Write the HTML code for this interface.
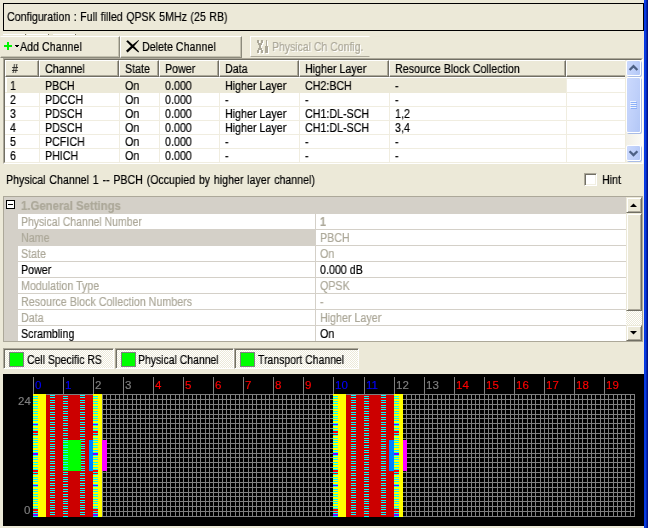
<!DOCTYPE html>
<html lang="en"><head><meta charset="utf-8"><title>Physical Channel Configuration</title>
<style>
html,body{margin:0;padding:0;}
body{width:648px;height:528px;overflow:hidden;background:#ece9d8;position:relative;
 font-family:"Liberation Sans","DejaVu Sans",sans-serif;font-size:12.5px;color:#000;line-height:13px;}
.a{position:absolute;white-space:nowrap;}
.t{position:absolute;white-space:nowrap;height:13px;line-height:13px;transform-origin:0 50%;transform:scaleX(0.855);will-change:transform;-webkit-text-stroke:0.2px currentColor;}
.g{color:#aca899;}
.b{font-weight:bold;}
.btn{position:absolute;box-sizing:border-box;border:1px solid;border-color:#fff #8c8a7c #8c8a7c #fff;}
.hd{position:absolute;box-sizing:border-box;top:60px;height:17px;background:#ece9d8;
 border-top:1px solid #fff;border-left:1px solid #fff;border-right:1px solid #716f64;border-bottom:1px solid #716f64;
 box-shadow:inset -1px -1px 0 #aca899;}
.row{position:absolute;left:5px;width:621px;height:13px;background:#fff;}
.leg{position:absolute;box-sizing:border-box;top:348px;height:21px;border:1px solid;border-color:#aca899 #fff #fff #aca899;
 background:repeating-conic-gradient(#fff 0 25%,#ece9d8 0 50%) 0 0/2px 2px;box-shadow:inset 1px 1px 0 #716f64;}
.sw{position:absolute;box-sizing:border-box;top:3px;width:15px;height:15px;background:#00ff00;border:1px solid #808080;}
.pr{position:absolute;left:18px;width:608px;height:15px;background:#fff;}
</style></head><body>
<div class="a" style="left:644px;top:0;width:1px;height:528px;background:#0636e6;"></div>
<div class="a" style="left:645px;top:0;width:1px;height:528px;background:#083fdc;"></div>
<div class="a" style="left:646px;top:0;width:1px;height:528px;background:#0325b4;"></div>
<div class="a" style="left:647px;top:0;width:1px;height:528px;background:#00118a;"></div>
<div class="a" style="left:3px;top:3px;width:639px;height:26px;border:1px solid #000;background:#ece9d8;"></div>
<div class="t " style="left:7px;top:11px;transform:scaleX(0.85);word-spacing:0.65px;">Configuration : Full filled QPSK 5MHz (25 RB)</div>
<div class="a" style="left:3px;top:34px;width:22px;height:1px;background:#fff;"></div>
<div class="a" style="left:25px;top:34px;width:1px;height:1px;background:#716f64;"></div>
<div class="a" style="left:27px;top:34px;width:21px;height:1px;background:#fff;"></div>
<div class="a" style="left:48px;top:34px;width:1px;height:1px;background:#716f64;"></div>
<div class="a" style="left:53px;top:34px;width:22px;height:1px;background:#fff;"></div>
<div class="a" style="left:75px;top:34px;width:1px;height:1px;background:#716f64;"></div>
<div class="btn" style="left:0;top:36px;width:120px;height:22px;border-left-color:#ece9d8;box-shadow:inset -1px -1px 0 #c4c1b0;"></div>
<div class="btn" style="left:120px;top:36px;width:122px;height:22px;box-shadow:inset -1px -1px 0 #c4c1b0;"></div>
<div class="a" style="left:250px;top:36px;width:120px;height:21px;box-sizing:border-box;border:1px solid;border-color:#fff #ece9d8 #aca899 #fff;"></div>
<svg class="a" style="left:0px;top:36px" width="20" height="22" viewBox="0 0 20 22" shape-rendering="crispEdges"><path d="M7 6h2v8h-2zM4 9h8v2h-8z" fill="#00f400"/><path d="M15 9h4v1h-4zM16 10h2v1h-2z" fill="#000"/></svg>
<div class="t " style="left:20px;top:41px;">Add Channel</div>
<svg class="a" style="left:120px;top:36px" width="22" height="22" viewBox="0 0 22 22"><path d="M6.2 5.2L7.8 4.2L13.5 9.6L19 15.6L18.4 16.4L12 11.2z" fill="#000"/><path d="M6 14.8L7.6 16.6L13.2 11.2L19 4.6L18.6 4L12 9.2z" fill="#000"/></svg>
<div class="t " style="left:142px;top:41px;">Delete Channel</div>
<svg class="a" style="left:250px;top:36px" width="22" height="22" viewBox="0 0 22 22" shape-rendering="crispEdges"><path transform="translate(1,1)" d="M7 4h2v3h-2zM11 4h2v3h-2zM8 7h4v2h-4zM9 8h2v5h-2zM8 12h4v2h-4zM7 14h2v3h-2zM11 14h2v3h-2zM16 4h1v7h-1zM15 10h3v7h-3z" fill="#fff"/><path d="M7 4h2v3h-2zM11 4h2v3h-2zM8 7h4v2h-4zM9 8h2v5h-2zM8 12h4v2h-4zM7 14h2v3h-2zM11 14h2v3h-2zM16 4h1v7h-1zM15 10h3v7h-3z" fill="#aca899"/></svg>
<div class="t g" style="left:272px;top:41px;transform:scaleX(0.838);text-shadow:1.2px 1px 0 #fff;">Physical Ch Config.</div>
<div class="a" style="left:3px;top:58px;width:640px;height:106px;box-sizing:border-box;border:1px solid;border-color:#aca899 #fff #fff #aca899;background:#fff;"></div>
<div class="a" style="left:4px;top:59px;width:638px;height:104px;box-sizing:border-box;border:1px solid;border-color:#716f64 #f1efe2 #f1efe2 #716f64;background:#fff;"></div>
<div class="a" style="left:5px;top:60px;width:621px;height:17px;background:#716f64;"></div>
<div class="hd" style="left:5px;width:34px;"></div>
<div class="t " style="left:12px;top:63px;">#</div>
<div class="hd" style="left:39px;width:80px;"></div>
<div class="t " style="left:45px;top:63px;">Channel</div>
<div class="hd" style="left:119px;width:40px;"></div>
<div class="t " style="left:125px;top:63px;">State</div>
<div class="hd" style="left:159px;width:60px;"></div>
<div class="t " style="left:165px;top:63px;">Power</div>
<div class="hd" style="left:219px;width:80px;"></div>
<div class="t " style="left:225px;top:63px;">Data</div>
<div class="hd" style="left:299px;width:90px;"></div>
<div class="t " style="left:305px;top:63px;">Higher Layer</div>
<div class="hd" style="left:389px;width:177px;"></div>
<div class="t " style="left:395px;top:63px;">Resource Block Collection</div>
<div class="hd" style="left:566px;width:62px;"></div>
<div class="a" style="left:5px;top:77px;width:621px;height:1px;background:#fff;"></div>
<div class="a" style="left:5px;top:78px;width:621px;height:85px;background:#f0ede0;"></div>
<div class="a" style="left:7px;top:78px;width:559px;height:15px;background:#ece9d8;"></div>
<div class="a" style="left:5px;top:78px;width:2px;height:14px;background:#fff;"></div>
<div class="a" style="left:567px;top:79px;width:58px;height:13px;background:#fff;"></div>
<div class="t " style="left:10px;top:80px;">1</div>
<div class="t " style="left:45px;top:80px;">PBCH</div>
<div class="t " style="left:125px;top:80px;">On</div>
<div class="t " style="left:165px;top:80px;">0.000</div>
<div class="t " style="left:225px;top:80px;">Higher Layer</div>
<div class="t " style="left:305px;top:80px;">CH2:BCH</div>
<div class="t " style="left:395px;top:80px;">-</div>
<div class="a" style="left:5px;top:93px;width:34px;height:13px;background:#fff;"></div>
<div class="a" style="left:40px;top:93px;width:79px;height:13px;background:#fff;"></div>
<div class="a" style="left:120px;top:93px;width:39px;height:13px;background:#fff;"></div>
<div class="a" style="left:160px;top:93px;width:59px;height:13px;background:#fff;"></div>
<div class="a" style="left:220px;top:93px;width:79px;height:13px;background:#fff;"></div>
<div class="a" style="left:300px;top:93px;width:89px;height:13px;background:#fff;"></div>
<div class="a" style="left:390px;top:93px;width:176px;height:13px;background:#fff;"></div>
<div class="a" style="left:567px;top:93px;width:58px;height:13px;background:#fff;"></div>
<div class="t " style="left:10px;top:94px;">2</div>
<div class="t " style="left:45px;top:94px;">PDCCH</div>
<div class="t " style="left:125px;top:94px;">On</div>
<div class="t " style="left:165px;top:94px;">0.000</div>
<div class="t " style="left:225px;top:94px;">-</div>
<div class="t " style="left:305px;top:94px;">-</div>
<div class="t " style="left:395px;top:94px;">-</div>
<div class="a" style="left:5px;top:107px;width:34px;height:13px;background:#fff;"></div>
<div class="a" style="left:40px;top:107px;width:79px;height:13px;background:#fff;"></div>
<div class="a" style="left:120px;top:107px;width:39px;height:13px;background:#fff;"></div>
<div class="a" style="left:160px;top:107px;width:59px;height:13px;background:#fff;"></div>
<div class="a" style="left:220px;top:107px;width:79px;height:13px;background:#fff;"></div>
<div class="a" style="left:300px;top:107px;width:89px;height:13px;background:#fff;"></div>
<div class="a" style="left:390px;top:107px;width:176px;height:13px;background:#fff;"></div>
<div class="a" style="left:567px;top:107px;width:58px;height:13px;background:#fff;"></div>
<div class="t " style="left:10px;top:108px;">3</div>
<div class="t " style="left:45px;top:108px;">PDSCH</div>
<div class="t " style="left:125px;top:108px;">On</div>
<div class="t " style="left:165px;top:108px;">0.000</div>
<div class="t " style="left:225px;top:108px;">Higher Layer</div>
<div class="t " style="left:305px;top:108px;">CH1:DL-SCH</div>
<div class="t " style="left:395px;top:108px;">1,2</div>
<div class="a" style="left:5px;top:121px;width:34px;height:13px;background:#fff;"></div>
<div class="a" style="left:40px;top:121px;width:79px;height:13px;background:#fff;"></div>
<div class="a" style="left:120px;top:121px;width:39px;height:13px;background:#fff;"></div>
<div class="a" style="left:160px;top:121px;width:59px;height:13px;background:#fff;"></div>
<div class="a" style="left:220px;top:121px;width:79px;height:13px;background:#fff;"></div>
<div class="a" style="left:300px;top:121px;width:89px;height:13px;background:#fff;"></div>
<div class="a" style="left:390px;top:121px;width:176px;height:13px;background:#fff;"></div>
<div class="a" style="left:567px;top:121px;width:58px;height:13px;background:#fff;"></div>
<div class="t " style="left:10px;top:122px;">4</div>
<div class="t " style="left:45px;top:122px;">PDSCH</div>
<div class="t " style="left:125px;top:122px;">On</div>
<div class="t " style="left:165px;top:122px;">0.000</div>
<div class="t " style="left:225px;top:122px;">Higher Layer</div>
<div class="t " style="left:305px;top:122px;">CH1:DL-SCH</div>
<div class="t " style="left:395px;top:122px;">3,4</div>
<div class="a" style="left:5px;top:135px;width:34px;height:13px;background:#fff;"></div>
<div class="a" style="left:40px;top:135px;width:79px;height:13px;background:#fff;"></div>
<div class="a" style="left:120px;top:135px;width:39px;height:13px;background:#fff;"></div>
<div class="a" style="left:160px;top:135px;width:59px;height:13px;background:#fff;"></div>
<div class="a" style="left:220px;top:135px;width:79px;height:13px;background:#fff;"></div>
<div class="a" style="left:300px;top:135px;width:89px;height:13px;background:#fff;"></div>
<div class="a" style="left:390px;top:135px;width:176px;height:13px;background:#fff;"></div>
<div class="a" style="left:567px;top:135px;width:58px;height:13px;background:#fff;"></div>
<div class="t " style="left:10px;top:136px;">5</div>
<div class="t " style="left:45px;top:136px;">PCFICH</div>
<div class="t " style="left:125px;top:136px;">On</div>
<div class="t " style="left:165px;top:136px;">0.000</div>
<div class="t " style="left:225px;top:136px;">-</div>
<div class="t " style="left:305px;top:136px;">-</div>
<div class="t " style="left:395px;top:136px;">-</div>
<div class="a" style="left:5px;top:149px;width:34px;height:13px;background:#fff;"></div>
<div class="a" style="left:40px;top:149px;width:79px;height:13px;background:#fff;"></div>
<div class="a" style="left:120px;top:149px;width:39px;height:13px;background:#fff;"></div>
<div class="a" style="left:160px;top:149px;width:59px;height:13px;background:#fff;"></div>
<div class="a" style="left:220px;top:149px;width:79px;height:13px;background:#fff;"></div>
<div class="a" style="left:300px;top:149px;width:89px;height:13px;background:#fff;"></div>
<div class="a" style="left:390px;top:149px;width:176px;height:13px;background:#fff;"></div>
<div class="a" style="left:567px;top:149px;width:58px;height:13px;background:#fff;"></div>
<div class="t " style="left:10px;top:150px;">6</div>
<div class="t " style="left:45px;top:150px;">PHICH</div>
<div class="t " style="left:125px;top:150px;">On</div>
<div class="t " style="left:165px;top:150px;">0.000</div>
<div class="t " style="left:225px;top:150px;">-</div>
<div class="t " style="left:305px;top:150px;">-</div>
<div class="t " style="left:395px;top:150px;">-</div>
<div class="a" style="left:625px;top:60px;width:1px;height:102px;background:#efecdd;"></div>
<div class="a" style="left:626px;top:60px;width:16px;height:102px;background:linear-gradient(90deg,#f1efe6,#fbfaf6);"></div>
<div class="a" style="left:643px;top:58px;width:1px;height:106px;background:#f3f0e1;"></div>
<div class="a" style="left:626px;top:60px;width:15px;height:16px;box-sizing:border-box;border:1px solid #fff;border-radius:2px;background:linear-gradient(100deg,#cbd9fd,#bfd0fa 55%,#b3c7f6);box-shadow:1px 1px 0 #a9bce6;"></div>
<svg class="a" style="left:626px;top:60px" width="15" height="16" viewBox="0 0 15 16"><path d="M3.6 10L7.5 6.1L11.4 10" stroke="#4d6185" stroke-width="2.3" fill="none"/></svg>
<div class="a" style="left:626px;top:77px;width:15px;height:56px;box-sizing:border-box;border:1px solid #fff;border-radius:2px;background:linear-gradient(100deg,#cbd9fd,#bfd0fa 55%,#b3c7f6);box-shadow:1px 1px 0 #a9bce6;"></div>
<svg class="a" style="left:626px;top:77px" width="15" height="56" viewBox="0 0 15 56" shape-rendering="crispEdges"><rect x="4" y="24" width="6" height="1" fill="#eef4fe"/><rect x="5" y="25" width="6" height="1" fill="#8cb0f8"/><rect x="4" y="26" width="6" height="1" fill="#eef4fe"/><rect x="5" y="27" width="6" height="1" fill="#8cb0f8"/><rect x="4" y="28" width="6" height="1" fill="#eef4fe"/><rect x="5" y="29" width="6" height="1" fill="#8cb0f8"/><rect x="4" y="30" width="6" height="1" fill="#eef4fe"/><rect x="5" y="31" width="6" height="1" fill="#8cb0f8"/></svg>
<div class="a" style="left:626px;top:145px;width:15px;height:16px;box-sizing:border-box;border:1px solid #fff;border-radius:2px;background:linear-gradient(100deg,#cbd9fd,#bfd0fa 55%,#b3c7f6);box-shadow:1px 1px 0 #a9bce6;"></div>
<svg class="a" style="left:626px;top:145px" width="15" height="16" viewBox="0 0 15 16"><path d="M3.6 6.2L7.5 10.1L11.4 6.2" stroke="#4d6185" stroke-width="2.3" fill="none"/></svg>
<div class="t " style="left:6px;top:174px;transform:scaleX(0.85);word-spacing:1px;">Physical Channel 1 -- PBCH (Occupied by higher layer channel)</div>
<div class="a" style="left:584px;top:173px;width:13px;height:13px;box-sizing:border-box;border:1px solid;border-color:#aca899 #fff #fff #aca899;background:#fff;box-shadow:inset 1px 1px 0 #716f64, inset -1px -1px 0 #f1efe2;"></div>
<div class="t " style="left:602px;top:174px;">Hint</div>
<div class="a" style="left:3px;top:196px;width:640px;height:146px;box-sizing:border-box;border:1px solid #aca899;background:#d4d0c8;"></div>
<div class="a" style="left:4px;top:197px;width:622px;height:144px;background:#d4d0c8;"></div>
<div class="a" style="left:6px;top:200px;width:9px;height:9px;box-sizing:border-box;border:1px solid #000;background:#fff;"></div>
<div class="a" style="left:8px;top:204px;width:5px;height:1px;background:#000;"></div>
<div class="t g b" style="left:21px;top:200px;transform:scaleX(0.91);">1.General Settings</div>
<div class="a" style="left:18px;top:214px;width:297px;height:15px;background:#fff;"></div>
<div class="a" style="left:316px;top:214px;width:310px;height:15px;background:#fff;"></div>
<div class="t g" style="left:21px;top:216px;transform:scaleX(0.836);">Physical Channel Number</div>
<div class="t g b" style="left:320px;top:216px;">1</div>
<div class="a" style="left:18px;top:230px;width:297px;height:15px;background:#d4d0c8;"></div>
<div class="a" style="left:316px;top:230px;width:310px;height:15px;background:#fff;"></div>
<div class="t g" style="left:21px;top:232px;">Name</div>
<div class="t g" style="left:320px;top:232px;">PBCH</div>
<div class="a" style="left:18px;top:246px;width:297px;height:15px;background:#fff;"></div>
<div class="a" style="left:316px;top:246px;width:310px;height:15px;background:#fff;"></div>
<div class="t g" style="left:21px;top:248px;">State</div>
<div class="t g" style="left:320px;top:248px;">On</div>
<div class="a" style="left:18px;top:262px;width:297px;height:15px;background:#fff;"></div>
<div class="a" style="left:316px;top:262px;width:310px;height:15px;background:#fff;"></div>
<div class="t " style="left:21px;top:264px;">Power</div>
<div class="t " style="left:320px;top:264px;">0.000 dB</div>
<div class="a" style="left:18px;top:278px;width:297px;height:15px;background:#fff;"></div>
<div class="a" style="left:316px;top:278px;width:310px;height:15px;background:#fff;"></div>
<div class="t g" style="left:21px;top:280px;">Modulation Type</div>
<div class="t g" style="left:320px;top:280px;">QPSK</div>
<div class="a" style="left:18px;top:294px;width:297px;height:15px;background:#fff;"></div>
<div class="a" style="left:316px;top:294px;width:310px;height:15px;background:#fff;"></div>
<div class="t g" style="left:21px;top:296px;">Resource Block Collection Numbers</div>
<div class="t g" style="left:320px;top:296px;">-</div>
<div class="a" style="left:18px;top:310px;width:297px;height:15px;background:#fff;"></div>
<div class="a" style="left:316px;top:310px;width:310px;height:15px;background:#fff;"></div>
<div class="t g" style="left:21px;top:312px;">Data</div>
<div class="t g" style="left:320px;top:312px;">Higher Layer</div>
<div class="a" style="left:18px;top:326px;width:297px;height:15px;background:#fff;"></div>
<div class="a" style="left:316px;top:326px;width:310px;height:15px;background:#fff;"></div>
<div class="t " style="left:21px;top:328px;">Scrambling</div>
<div class="t " style="left:320px;top:328px;">On</div>
<div class="a" style="left:626px;top:197px;width:16px;height:144px;background:repeating-conic-gradient(#fff 0 25%,#ece9d8 0 50%) 0 0/2px 2px;"></div>
<div class="a" style="left:626px;top:197px;width:16px;height:16px;box-sizing:border-box;border:1px solid;border-color:#ece9d8 #716f64 #716f64 #ece9d8;background:#ece9d8;box-shadow:inset 1px 1px 0 #fff, inset -1px -1px 0 #aca899;"></div>
<svg class="a" style="left:626px;top:197px" width="16" height="16" viewBox="0 0 16 16"><path d="M4 10h7L7.5 6.5z" fill="#000"/></svg>
<div class="a" style="left:626px;top:213px;width:16px;height:98px;box-sizing:border-box;border:1px solid;border-color:#ece9d8 #716f64 #716f64 #ece9d8;background:#ece9d8;box-shadow:inset 1px 1px 0 #fff, inset -1px -1px 0 #aca899;"></div>
<div class="a" style="left:626px;top:325px;width:16px;height:16px;box-sizing:border-box;border:1px solid;border-color:#ece9d8 #716f64 #716f64 #ece9d8;background:#ece9d8;box-shadow:inset 1px 1px 0 #fff, inset -1px -1px 0 #aca899;"></div>
<svg class="a" style="left:626px;top:325px" width="16" height="16" viewBox="0 0 16 16"><path d="M4 6h7L7.5 9.5z" fill="#000"/></svg>
<div class="leg" style="left:3px;width:111px;"><div class="sw" style="left:5px;"></div></div>
<div class="t " style="left:27px;top:354px;transform:scaleX(0.835);">Cell Specific RS</div>
<div class="leg" style="left:115px;width:119px;"><div class="sw" style="left:5px;"></div></div>
<div class="t " style="left:138px;top:354px;transform:scaleX(0.835);">Physical Channel</div>
<div class="leg" style="left:234px;width:125px;"><div class="sw" style="left:5px;"></div></div>
<div class="t " style="left:258px;top:354px;transform:scaleX(0.835);">Transport Channel</div>
<div class="a" style="left:3px;top:374px;width:641px;height:152px;background:#000;"></div>
<svg class="a" style="left:0;top:0" width="648" height="528" viewBox="0 0 648 528" shape-rendering="crispEdges"><path d="M33 394h1v123h-1zM37 394h1v123h-1zM42 394h1v123h-1zM46 394h1v123h-1zM50 394h1v123h-1zM54 394h1v123h-1zM59 394h1v123h-1zM63 394h1v123h-1zM67 394h1v123h-1zM72 394h1v123h-1zM76 394h1v123h-1zM80 394h1v123h-1zM85 394h1v123h-1zM89 394h1v123h-1zM93 394h1v123h-1zM97 394h1v123h-1zM102 394h1v123h-1zM106 394h1v123h-1zM110 394h1v123h-1zM115 394h1v123h-1zM119 394h1v123h-1zM123 394h1v123h-1zM127 394h1v123h-1zM132 394h1v123h-1zM136 394h1v123h-1zM140 394h1v123h-1zM145 394h1v123h-1zM149 394h1v123h-1zM153 394h1v123h-1zM157 394h1v123h-1zM162 394h1v123h-1zM166 394h1v123h-1zM170 394h1v123h-1zM175 394h1v123h-1zM179 394h1v123h-1zM183 394h1v123h-1zM188 394h1v123h-1zM192 394h1v123h-1zM196 394h1v123h-1zM200 394h1v123h-1zM205 394h1v123h-1zM209 394h1v123h-1zM213 394h1v123h-1zM218 394h1v123h-1zM222 394h1v123h-1zM226 394h1v123h-1zM230 394h1v123h-1zM235 394h1v123h-1zM239 394h1v123h-1zM243 394h1v123h-1zM248 394h1v123h-1zM252 394h1v123h-1zM256 394h1v123h-1zM261 394h1v123h-1zM265 394h1v123h-1zM269 394h1v123h-1zM273 394h1v123h-1zM278 394h1v123h-1zM282 394h1v123h-1zM286 394h1v123h-1zM291 394h1v123h-1zM295 394h1v123h-1zM299 394h1v123h-1zM303 394h1v123h-1zM308 394h1v123h-1zM312 394h1v123h-1zM316 394h1v123h-1zM321 394h1v123h-1zM325 394h1v123h-1zM329 394h1v123h-1zM333 394h1v123h-1zM338 394h1v123h-1zM342 394h1v123h-1zM346 394h1v123h-1zM351 394h1v123h-1zM355 394h1v123h-1zM359 394h1v123h-1zM364 394h1v123h-1zM368 394h1v123h-1zM372 394h1v123h-1zM376 394h1v123h-1zM381 394h1v123h-1zM385 394h1v123h-1zM389 394h1v123h-1zM394 394h1v123h-1zM398 394h1v123h-1zM402 394h1v123h-1zM406 394h1v123h-1zM411 394h1v123h-1zM415 394h1v123h-1zM419 394h1v123h-1zM424 394h1v123h-1zM428 394h1v123h-1zM432 394h1v123h-1zM437 394h1v123h-1zM441 394h1v123h-1zM445 394h1v123h-1zM449 394h1v123h-1zM454 394h1v123h-1zM458 394h1v123h-1zM462 394h1v123h-1zM467 394h1v123h-1zM471 394h1v123h-1zM475 394h1v123h-1zM479 394h1v123h-1zM484 394h1v123h-1zM488 394h1v123h-1zM492 394h1v123h-1zM497 394h1v123h-1zM501 394h1v123h-1zM505 394h1v123h-1zM510 394h1v123h-1zM514 394h1v123h-1zM518 394h1v123h-1zM522 394h1v123h-1zM527 394h1v123h-1zM531 394h1v123h-1zM535 394h1v123h-1zM540 394h1v123h-1zM544 394h1v123h-1zM548 394h1v123h-1zM552 394h1v123h-1zM557 394h1v123h-1zM561 394h1v123h-1zM565 394h1v123h-1zM570 394h1v123h-1zM574 394h1v123h-1zM578 394h1v123h-1zM582 394h1v123h-1zM587 394h1v123h-1zM591 394h1v123h-1zM595 394h1v123h-1zM600 394h1v123h-1zM604 394h1v123h-1zM608 394h1v123h-1zM613 394h1v123h-1zM617 394h1v123h-1zM621 394h1v123h-1zM625 394h1v123h-1zM630 394h1v123h-1zM634 394h1v123h-1z" fill="#808080"/><path d="M33 394h602v1h-602zM33 399h602v1h-602zM33 404h602v1h-602zM33 409h602v1h-602zM33 414h602v1h-602zM33 418h602v1h-602zM33 423h602v1h-602zM33 428h602v1h-602zM33 433h602v1h-602zM33 438h602v1h-602zM33 443h602v1h-602zM33 448h602v1h-602zM33 453h602v1h-602zM33 457h602v1h-602zM33 462h602v1h-602zM33 467h602v1h-602zM33 472h602v1h-602zM33 477h602v1h-602zM33 482h602v1h-602zM33 487h602v1h-602zM33 492h602v1h-602zM33 496h602v1h-602zM33 501h602v1h-602zM33 506h602v1h-602zM33 511h602v1h-602zM33 516h602v1h-602z" fill="#808080"/><path d="M33 377h1v17h-1zM63 377h1v17h-1zM93 377h1v17h-1zM123 377h1v17h-1zM153 377h1v17h-1zM183 377h1v17h-1zM213 377h1v17h-1zM243 377h1v17h-1zM273 377h1v17h-1zM303 377h1v17h-1zM333 377h1v17h-1zM364 377h1v17h-1zM394 377h1v17h-1zM424 377h1v17h-1zM454 377h1v17h-1zM484 377h1v17h-1zM514 377h1v17h-1zM544 377h1v17h-1zM574 377h1v17h-1zM604 377h1v17h-1z" fill="#808080"/><rect x="33" y="394" width="13" height="123" fill="#ffff00"/><rect x="46" y="395" width="48" height="122" fill="#cc0000"/><rect x="102" y="440" width="5" height="31" fill="#ff00ff"/><rect x="93" y="394" width="9" height="123" fill="#ffff00"/><rect x="33" y="424" width="5" height="1" fill="#8000ff"/><rect x="33" y="453" width="5" height="2" fill="#8000ff"/><rect x="33" y="485" width="5" height="1" fill="#8000ff"/><rect x="33" y="514" width="5" height="2" fill="#8000ff"/><rect x="33" y="431" width="5" height="2" fill="#ff0000"/><rect x="33" y="434" width="5" height="1" fill="#ff0000"/><rect x="33" y="470" width="5" height="2" fill="#ff0000"/><rect x="33" y="473" width="5" height="1" fill="#ff0000"/><rect x="33" y="509" width="5" height="2" fill="#ff0000"/><rect x="33" y="512" width="5" height="1" fill="#ff0000"/><rect x="93" y="424" width="5" height="1" fill="#8000ff"/><rect x="93" y="453" width="5" height="2" fill="#8000ff"/><rect x="93" y="485" width="5" height="1" fill="#8000ff"/><rect x="93" y="514" width="5" height="2" fill="#8000ff"/><rect x="93" y="431" width="5" height="2" fill="#ff0000"/><rect x="93" y="434" width="5" height="1" fill="#ff0000"/><rect x="93" y="470" width="5" height="2" fill="#ff0000"/><rect x="93" y="473" width="5" height="1" fill="#ff0000"/><rect x="93" y="509" width="5" height="2" fill="#ff0000"/><rect x="93" y="512" width="5" height="1" fill="#ff0000"/><path d="M33 396h5v1h-5zM33 398h5v1h-5zM33 401h5v1h-5zM33 403h5v1h-5zM33 406h5v1h-5zM33 408h5v1h-5zM33 411h5v1h-5zM33 413h5v1h-5zM33 416h5v1h-5zM33 418h5v1h-5zM33 420h5v1h-5zM33 423h5v1h-5zM33 425h5v1h-5zM33 428h5v1h-5zM33 430h5v1h-5zM33 433h5v1h-5zM33 435h5v1h-5zM33 438h5v1h-5zM33 440h5v1h-5zM33 442h5v1h-5zM33 445h5v1h-5zM33 447h5v1h-5zM33 450h5v1h-5zM33 452h5v1h-5zM33 455h5v1h-5zM33 457h5v1h-5zM33 459h5v1h-5zM33 462h5v1h-5zM33 464h5v1h-5zM33 467h5v1h-5zM33 469h5v1h-5zM33 472h5v1h-5zM33 474h5v1h-5zM33 477h5v1h-5zM33 479h5v1h-5zM33 481h5v1h-5zM33 484h5v1h-5zM33 486h5v1h-5zM33 489h5v1h-5zM33 491h5v1h-5zM33 494h5v1h-5zM33 496h5v1h-5zM33 499h5v1h-5zM33 501h5v1h-5zM33 503h5v1h-5zM33 506h5v1h-5zM33 508h5v1h-5zM33 511h5v1h-5zM33 513h5v1h-5zM33 516h5v1h-5z" fill="#00ffff"/><path d="M50 395h5v1h-5zM50 397h5v1h-5zM50 400h5v1h-5zM50 402h5v1h-5zM50 405h5v1h-5zM50 407h5v1h-5zM50 409h5v1h-5zM50 412h5v1h-5zM50 414h5v1h-5zM50 417h5v1h-5zM50 419h5v1h-5zM50 422h5v1h-5zM50 424h5v1h-5zM50 427h5v1h-5zM50 429h5v1h-5zM50 431h5v1h-5zM50 434h5v1h-5zM50 436h5v1h-5zM50 439h5v1h-5zM50 441h5v1h-5zM50 444h5v1h-5zM50 446h5v1h-5zM50 448h5v1h-5zM50 451h5v1h-5zM50 453h5v1h-5zM50 456h5v1h-5zM50 458h5v1h-5zM50 461h5v1h-5zM50 463h5v1h-5zM50 466h5v1h-5zM50 468h5v1h-5zM50 470h5v1h-5zM50 473h5v1h-5zM50 475h5v1h-5zM50 478h5v1h-5zM50 480h5v1h-5zM50 483h5v1h-5zM50 485h5v1h-5zM50 488h5v1h-5zM50 490h5v1h-5zM50 492h5v1h-5zM50 495h5v1h-5zM50 497h5v1h-5zM50 500h5v1h-5zM50 502h5v1h-5zM50 505h5v1h-5zM50 507h5v1h-5zM50 509h5v1h-5zM50 512h5v1h-5zM50 514h5v1h-5z" fill="#00ffff"/><path d="M63 396h5v1h-5zM63 398h5v1h-5zM63 401h5v1h-5zM63 403h5v1h-5zM63 406h5v1h-5zM63 408h5v1h-5zM63 411h5v1h-5zM63 413h5v1h-5zM63 416h5v1h-5zM63 418h5v1h-5zM63 420h5v1h-5zM63 423h5v1h-5zM63 425h5v1h-5zM63 428h5v1h-5zM63 430h5v1h-5zM63 433h5v1h-5zM63 435h5v1h-5zM63 438h5v1h-5zM63 440h5v1h-5zM63 442h5v1h-5zM63 445h5v1h-5zM63 447h5v1h-5zM63 450h5v1h-5zM63 452h5v1h-5zM63 455h5v1h-5zM63 457h5v1h-5zM63 459h5v1h-5zM63 462h5v1h-5zM63 464h5v1h-5zM63 467h5v1h-5zM63 469h5v1h-5zM63 472h5v1h-5zM63 474h5v1h-5zM63 477h5v1h-5zM63 479h5v1h-5zM63 481h5v1h-5zM63 484h5v1h-5zM63 486h5v1h-5zM63 489h5v1h-5zM63 491h5v1h-5zM63 494h5v1h-5zM63 496h5v1h-5zM63 499h5v1h-5zM63 501h5v1h-5zM63 503h5v1h-5zM63 506h5v1h-5zM63 508h5v1h-5zM63 511h5v1h-5zM63 513h5v1h-5zM63 516h5v1h-5z" fill="#00ffff"/><path d="M80 395h5v1h-5zM80 397h5v1h-5zM80 400h5v1h-5zM80 402h5v1h-5zM80 405h5v1h-5zM80 407h5v1h-5zM80 409h5v1h-5zM80 412h5v1h-5zM80 414h5v1h-5zM80 417h5v1h-5zM80 419h5v1h-5zM80 422h5v1h-5zM80 424h5v1h-5zM80 427h5v1h-5zM80 429h5v1h-5zM80 431h5v1h-5zM80 434h5v1h-5zM80 436h5v1h-5zM80 439h5v1h-5zM80 441h5v1h-5zM80 444h5v1h-5zM80 446h5v1h-5zM80 448h5v1h-5zM80 451h5v1h-5zM80 453h5v1h-5zM80 456h5v1h-5zM80 458h5v1h-5zM80 461h5v1h-5zM80 463h5v1h-5zM80 466h5v1h-5zM80 468h5v1h-5zM80 470h5v1h-5zM80 473h5v1h-5zM80 475h5v1h-5zM80 478h5v1h-5zM80 480h5v1h-5zM80 483h5v1h-5zM80 485h5v1h-5zM80 488h5v1h-5zM80 490h5v1h-5zM80 492h5v1h-5zM80 495h5v1h-5zM80 497h5v1h-5zM80 500h5v1h-5zM80 502h5v1h-5zM80 505h5v1h-5zM80 507h5v1h-5zM80 509h5v1h-5zM80 512h5v1h-5zM80 514h5v1h-5z" fill="#00ffff"/><path d="M93 396h5v1h-5zM93 398h5v1h-5zM93 401h5v1h-5zM93 403h5v1h-5zM93 406h5v1h-5zM93 408h5v1h-5zM93 411h5v1h-5zM93 413h5v1h-5zM93 416h5v1h-5zM93 418h5v1h-5zM93 420h5v1h-5zM93 423h5v1h-5zM93 425h5v1h-5zM93 428h5v1h-5zM93 430h5v1h-5zM93 433h5v1h-5zM93 435h5v1h-5zM93 438h5v1h-5zM93 440h5v1h-5zM93 442h5v1h-5zM93 445h5v1h-5zM93 447h5v1h-5zM93 450h5v1h-5zM93 452h5v1h-5zM93 455h5v1h-5zM93 457h5v1h-5zM93 459h5v1h-5zM93 462h5v1h-5zM93 464h5v1h-5zM93 467h5v1h-5zM93 469h5v1h-5zM93 472h5v1h-5zM93 474h5v1h-5zM93 477h5v1h-5zM93 479h5v1h-5zM93 481h5v1h-5zM93 484h5v1h-5zM93 486h5v1h-5zM93 489h5v1h-5zM93 491h5v1h-5zM93 494h5v1h-5zM93 496h5v1h-5zM93 499h5v1h-5zM93 501h5v1h-5zM93 503h5v1h-5zM93 506h5v1h-5zM93 508h5v1h-5zM93 511h5v1h-5zM93 513h5v1h-5zM93 516h5v1h-5z" fill="#00ffff"/><rect x="68" y="440" width="13" height="31" fill="#00ff00"/><path d="M63 441h5v1h-5zM63 443h5v1h-5zM63 444h5v1h-5zM63 446h5v1h-5zM63 448h5v1h-5zM63 449h5v1h-5zM63 451h5v1h-5zM63 453h5v1h-5zM63 454h5v1h-5zM63 456h5v1h-5zM63 458h5v1h-5zM63 460h5v1h-5zM63 461h5v1h-5zM63 463h5v1h-5zM63 465h5v1h-5zM63 466h5v1h-5zM63 468h5v1h-5zM63 470h5v1h-5z" fill="#00ff00"/><rect x="89" y="440" width="4" height="31" fill="#0080ff"/><rect x="333" y="394" width="13" height="123" fill="#ffff00"/><rect x="346" y="395" width="48" height="122" fill="#cc0000"/><rect x="402" y="440" width="5" height="31" fill="#ff00ff"/><rect x="394" y="394" width="9" height="123" fill="#ffff00"/><rect x="333" y="424" width="5" height="1" fill="#8000ff"/><rect x="333" y="453" width="5" height="2" fill="#8000ff"/><rect x="333" y="485" width="5" height="1" fill="#8000ff"/><rect x="333" y="514" width="5" height="2" fill="#8000ff"/><rect x="333" y="431" width="5" height="2" fill="#ff0000"/><rect x="333" y="434" width="5" height="1" fill="#ff0000"/><rect x="333" y="470" width="5" height="2" fill="#ff0000"/><rect x="333" y="473" width="5" height="1" fill="#ff0000"/><rect x="333" y="509" width="5" height="2" fill="#ff0000"/><rect x="333" y="512" width="5" height="1" fill="#ff0000"/><rect x="394" y="424" width="5" height="1" fill="#8000ff"/><rect x="394" y="453" width="5" height="2" fill="#8000ff"/><rect x="394" y="485" width="5" height="1" fill="#8000ff"/><rect x="394" y="514" width="5" height="2" fill="#8000ff"/><rect x="394" y="431" width="5" height="2" fill="#ff0000"/><rect x="394" y="434" width="5" height="1" fill="#ff0000"/><rect x="394" y="470" width="5" height="2" fill="#ff0000"/><rect x="394" y="473" width="5" height="1" fill="#ff0000"/><rect x="394" y="509" width="5" height="2" fill="#ff0000"/><rect x="394" y="512" width="5" height="1" fill="#ff0000"/><path d="M333 396h5v1h-5zM333 398h5v1h-5zM333 401h5v1h-5zM333 403h5v1h-5zM333 406h5v1h-5zM333 408h5v1h-5zM333 411h5v1h-5zM333 413h5v1h-5zM333 416h5v1h-5zM333 418h5v1h-5zM333 420h5v1h-5zM333 423h5v1h-5zM333 425h5v1h-5zM333 428h5v1h-5zM333 430h5v1h-5zM333 433h5v1h-5zM333 435h5v1h-5zM333 438h5v1h-5zM333 440h5v1h-5zM333 442h5v1h-5zM333 445h5v1h-5zM333 447h5v1h-5zM333 450h5v1h-5zM333 452h5v1h-5zM333 455h5v1h-5zM333 457h5v1h-5zM333 459h5v1h-5zM333 462h5v1h-5zM333 464h5v1h-5zM333 467h5v1h-5zM333 469h5v1h-5zM333 472h5v1h-5zM333 474h5v1h-5zM333 477h5v1h-5zM333 479h5v1h-5zM333 481h5v1h-5zM333 484h5v1h-5zM333 486h5v1h-5zM333 489h5v1h-5zM333 491h5v1h-5zM333 494h5v1h-5zM333 496h5v1h-5zM333 499h5v1h-5zM333 501h5v1h-5zM333 503h5v1h-5zM333 506h5v1h-5zM333 508h5v1h-5zM333 511h5v1h-5zM333 513h5v1h-5zM333 516h5v1h-5z" fill="#00ffff"/><path d="M351 395h5v1h-5zM351 397h5v1h-5zM351 400h5v1h-5zM351 402h5v1h-5zM351 405h5v1h-5zM351 407h5v1h-5zM351 409h5v1h-5zM351 412h5v1h-5zM351 414h5v1h-5zM351 417h5v1h-5zM351 419h5v1h-5zM351 422h5v1h-5zM351 424h5v1h-5zM351 427h5v1h-5zM351 429h5v1h-5zM351 431h5v1h-5zM351 434h5v1h-5zM351 436h5v1h-5zM351 439h5v1h-5zM351 441h5v1h-5zM351 444h5v1h-5zM351 446h5v1h-5zM351 448h5v1h-5zM351 451h5v1h-5zM351 453h5v1h-5zM351 456h5v1h-5zM351 458h5v1h-5zM351 461h5v1h-5zM351 463h5v1h-5zM351 466h5v1h-5zM351 468h5v1h-5zM351 470h5v1h-5zM351 473h5v1h-5zM351 475h5v1h-5zM351 478h5v1h-5zM351 480h5v1h-5zM351 483h5v1h-5zM351 485h5v1h-5zM351 488h5v1h-5zM351 490h5v1h-5zM351 492h5v1h-5zM351 495h5v1h-5zM351 497h5v1h-5zM351 500h5v1h-5zM351 502h5v1h-5zM351 505h5v1h-5zM351 507h5v1h-5zM351 509h5v1h-5zM351 512h5v1h-5zM351 514h5v1h-5z" fill="#00ffff"/><path d="M364 396h5v1h-5zM364 398h5v1h-5zM364 401h5v1h-5zM364 403h5v1h-5zM364 406h5v1h-5zM364 408h5v1h-5zM364 411h5v1h-5zM364 413h5v1h-5zM364 416h5v1h-5zM364 418h5v1h-5zM364 420h5v1h-5zM364 423h5v1h-5zM364 425h5v1h-5zM364 428h5v1h-5zM364 430h5v1h-5zM364 433h5v1h-5zM364 435h5v1h-5zM364 438h5v1h-5zM364 440h5v1h-5zM364 442h5v1h-5zM364 445h5v1h-5zM364 447h5v1h-5zM364 450h5v1h-5zM364 452h5v1h-5zM364 455h5v1h-5zM364 457h5v1h-5zM364 459h5v1h-5zM364 462h5v1h-5zM364 464h5v1h-5zM364 467h5v1h-5zM364 469h5v1h-5zM364 472h5v1h-5zM364 474h5v1h-5zM364 477h5v1h-5zM364 479h5v1h-5zM364 481h5v1h-5zM364 484h5v1h-5zM364 486h5v1h-5zM364 489h5v1h-5zM364 491h5v1h-5zM364 494h5v1h-5zM364 496h5v1h-5zM364 499h5v1h-5zM364 501h5v1h-5zM364 503h5v1h-5zM364 506h5v1h-5zM364 508h5v1h-5zM364 511h5v1h-5zM364 513h5v1h-5zM364 516h5v1h-5z" fill="#00ffff"/><path d="M381 395h5v1h-5zM381 397h5v1h-5zM381 400h5v1h-5zM381 402h5v1h-5zM381 405h5v1h-5zM381 407h5v1h-5zM381 409h5v1h-5zM381 412h5v1h-5zM381 414h5v1h-5zM381 417h5v1h-5zM381 419h5v1h-5zM381 422h5v1h-5zM381 424h5v1h-5zM381 427h5v1h-5zM381 429h5v1h-5zM381 431h5v1h-5zM381 434h5v1h-5zM381 436h5v1h-5zM381 439h5v1h-5zM381 441h5v1h-5zM381 444h5v1h-5zM381 446h5v1h-5zM381 448h5v1h-5zM381 451h5v1h-5zM381 453h5v1h-5zM381 456h5v1h-5zM381 458h5v1h-5zM381 461h5v1h-5zM381 463h5v1h-5zM381 466h5v1h-5zM381 468h5v1h-5zM381 470h5v1h-5zM381 473h5v1h-5zM381 475h5v1h-5zM381 478h5v1h-5zM381 480h5v1h-5zM381 483h5v1h-5zM381 485h5v1h-5zM381 488h5v1h-5zM381 490h5v1h-5zM381 492h5v1h-5zM381 495h5v1h-5zM381 497h5v1h-5zM381 500h5v1h-5zM381 502h5v1h-5zM381 505h5v1h-5zM381 507h5v1h-5zM381 509h5v1h-5zM381 512h5v1h-5zM381 514h5v1h-5z" fill="#00ffff"/><path d="M394 396h5v1h-5zM394 398h5v1h-5zM394 401h5v1h-5zM394 403h5v1h-5zM394 406h5v1h-5zM394 408h5v1h-5zM394 411h5v1h-5zM394 413h5v1h-5zM394 416h5v1h-5zM394 418h5v1h-5zM394 420h5v1h-5zM394 423h5v1h-5zM394 425h5v1h-5zM394 428h5v1h-5zM394 430h5v1h-5zM394 433h5v1h-5zM394 435h5v1h-5zM394 438h5v1h-5zM394 440h5v1h-5zM394 442h5v1h-5zM394 445h5v1h-5zM394 447h5v1h-5zM394 450h5v1h-5zM394 452h5v1h-5zM394 455h5v1h-5zM394 457h5v1h-5zM394 459h5v1h-5zM394 462h5v1h-5zM394 464h5v1h-5zM394 467h5v1h-5zM394 469h5v1h-5zM394 472h5v1h-5zM394 474h5v1h-5zM394 477h5v1h-5zM394 479h5v1h-5zM394 481h5v1h-5zM394 484h5v1h-5zM394 486h5v1h-5zM394 489h5v1h-5zM394 491h5v1h-5zM394 494h5v1h-5zM394 496h5v1h-5zM394 499h5v1h-5zM394 501h5v1h-5zM394 503h5v1h-5zM394 506h5v1h-5zM394 508h5v1h-5zM394 511h5v1h-5zM394 513h5v1h-5zM394 516h5v1h-5z" fill="#00ffff"/><rect x="389" y="440" width="5" height="31" fill="#0080ff"/></svg>
<div class="a" style="left:35px;top:379px;font-size:11.5px;line-height:13px;color:#0000ff;-webkit-text-stroke:0.15px #0000ff;">0</div>
<div class="a" style="left:65px;top:379px;font-size:11.5px;line-height:13px;color:#0000ff;-webkit-text-stroke:0.15px #0000ff;">1</div>
<div class="a" style="left:95px;top:379px;font-size:11.5px;line-height:13px;color:#808080;-webkit-text-stroke:0.15px #808080;">2</div>
<div class="a" style="left:125px;top:379px;font-size:11.5px;line-height:13px;color:#808080;-webkit-text-stroke:0.15px #808080;">3</div>
<div class="a" style="left:155px;top:379px;font-size:11.5px;line-height:13px;color:#ff0000;-webkit-text-stroke:0.15px #ff0000;">4</div>
<div class="a" style="left:185px;top:379px;font-size:11.5px;line-height:13px;color:#ff0000;-webkit-text-stroke:0.15px #ff0000;">5</div>
<div class="a" style="left:215px;top:379px;font-size:11.5px;line-height:13px;color:#ff0000;-webkit-text-stroke:0.15px #ff0000;">6</div>
<div class="a" style="left:245px;top:379px;font-size:11.5px;line-height:13px;color:#ff0000;-webkit-text-stroke:0.15px #ff0000;">7</div>
<div class="a" style="left:275px;top:379px;font-size:11.5px;line-height:13px;color:#ff0000;-webkit-text-stroke:0.15px #ff0000;">8</div>
<div class="a" style="left:305px;top:379px;font-size:11.5px;line-height:13px;color:#ff0000;-webkit-text-stroke:0.15px #ff0000;">9</div>
<div class="a" style="left:335px;top:379px;font-size:11.5px;line-height:13px;color:#0000ff;-webkit-text-stroke:0.15px #0000ff;">10</div>
<div class="a" style="left:366px;top:379px;font-size:11.5px;line-height:13px;color:#0000ff;-webkit-text-stroke:0.15px #0000ff;">11</div>
<div class="a" style="left:396px;top:379px;font-size:11.5px;line-height:13px;color:#808080;-webkit-text-stroke:0.15px #808080;">12</div>
<div class="a" style="left:426px;top:379px;font-size:11.5px;line-height:13px;color:#808080;-webkit-text-stroke:0.15px #808080;">13</div>
<div class="a" style="left:456px;top:379px;font-size:11.5px;line-height:13px;color:#ff0000;-webkit-text-stroke:0.15px #ff0000;">14</div>
<div class="a" style="left:486px;top:379px;font-size:11.5px;line-height:13px;color:#ff0000;-webkit-text-stroke:0.15px #ff0000;">15</div>
<div class="a" style="left:516px;top:379px;font-size:11.5px;line-height:13px;color:#ff0000;-webkit-text-stroke:0.15px #ff0000;">16</div>
<div class="a" style="left:546px;top:379px;font-size:11.5px;line-height:13px;color:#ff0000;-webkit-text-stroke:0.15px #ff0000;">17</div>
<div class="a" style="left:576px;top:379px;font-size:11.5px;line-height:13px;color:#ff0000;-webkit-text-stroke:0.15px #ff0000;">18</div>
<div class="a" style="left:606px;top:379px;font-size:11.5px;line-height:13px;color:#ff0000;-webkit-text-stroke:0.15px #ff0000;">19</div>
<div class="a" style="left:18px;top:395px;font-size:11.5px;line-height:13px;color:#808080;-webkit-text-stroke:0.15px #808080;">24</div>
<div class="a" style="left:24px;top:504px;font-size:11.5px;line-height:13px;color:#808080;-webkit-text-stroke:0.15px #808080;">0</div>
</body></html>
